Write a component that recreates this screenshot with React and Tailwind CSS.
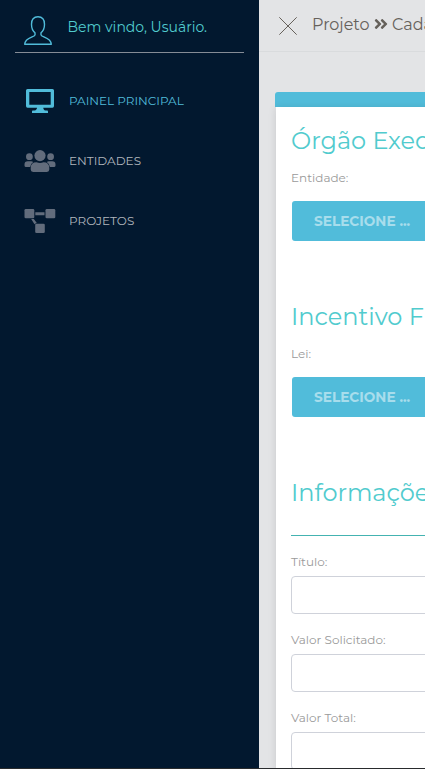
import { FaAngleDoubleRight } from "react-icons/fa";

function UserIcon() {
  return (
    <svg className="block h-[31px] w-[30px] shrink-0" viewBox="0 0 30 31" fill="none" stroke="#51bcda" strokeWidth="1.4" strokeLinejoin="round">
      <path d="M12 20V17.7C9.4 15.8 8.5 12.8 8.5 9.3C8.3 4.5 10.8 1.8 15 1.8S21.7 4.5 21.5 9.3C21.5 12.8 20.6 15.8 18 17.7V20C18.3 22 28.3 22.3 28.3 29.3H1.7C1.7 22.3 11.7 22 12 20Z" />
    </svg>
  );
}

function MonitorIcon() {
  return (
    <svg className="block h-6 w-7" viewBox="0 0 28 24" fill="#51bcda">
      <path fillRule="evenodd" d="M1.5 0h25Q28 0 28 1.500v15.500Q28 18.700 26.500 18.700H17.300C17.300 20 18 21 19.500 21.600H21.300Q22 21.700 22 22.800V24H6V22.800Q6 21.700 6.700 21.600H8.500C10 21 11 20 11 18.700H1.500Q0 18.700 0 17V1.500Q0 0 1.500 0ZM3.300 3v12.700H24.700V3Z" />
    </svg>
  );
}

function UsersIcon() {
  return (
    <svg className="block h-6 w-8" viewBox="0 0 32 24" fill="#626c7c">
      <circle cx="5.400" cy="7.700" r="3.400" />
      <circle cx="26.600" cy="7.700" r="3.400" />
      <circle cx="16" cy="6.600" r="5.600" />
      <path d="M3.700 12.300H7.200Q8.300 12.300 9.200 13.100Q6.700 14.600 6.200 18H2Q.5 18 .5 16.500V15.500Q.5 12.300 3.700 12.300Z" />
      <path d="M28.300 12.300H24.800Q23.700 12.300 22.800 13.100Q25.300 14.600 25.800 18H30Q31.500 18 31.500 16.500V15.500Q31.500 12.300 28.300 12.300Z" />
      <path d="M12.500 13.300Q16 14.700 19.500 13.300Q25.300 13.300 25.300 19V20.500Q25.300 22.900 22.900 22.900H9.100Q6.700 22.900 6.700 20.500V19Q6.700 13.300 12.500 13.300Z" />
    </svg>
  );
}

function DiagramIcon() {
  return (
    <svg className="block h-6 w-8" viewBox="0 0 32 24" fill="#626c7c">
      <rect x=".5" y="0" width="9.800" height="9.300" rx="1.300" />
      <rect x="21.500" y="0" width="9.800" height="9.300" rx="1.300" />
      <rect x="11.200" y="14.800" width="9.600" height="9.200" rx="1.300" />
      <path d="M11.300 3.200H20.500V6.300H11.300ZM7.200 9.900H9.800L12.800 13.900Q11.300 14 10.500 15.200Z" />
    </svg>
  );
}

function NavItem({ icon, className, children }) {
  return (
    <a className={"flex h-[60px] items-center pl-6 text-[12px] " + className}>
      <span className="flex w-8 shrink-0 justify-center">{icon}</span>
      <span className="ml-[13px] whitespace-nowrap">{children}</span>
    </a>
  );
}

function SelectSection({ title, label }) {
  return (
    <section className="h-44">
      <h4 className="h-9 whitespace-nowrap text-[24px] leading-9 text-[#51cbce]">{title}</h4>
      <label className="mt-[10px] block h-[18px] text-[12px] leading-[18px] text-[#9a9a9a]">{label}</label>
      <button className="mt-[14px] ml-px block h-10 w-[220px] rounded-[3px] bg-[#51bcda] pl-[22px] text-left text-[13.7px] font-bold text-white/50">
        SELECIONE ...
      </button>
    </section>
  );
}

function Field({ label }) {
  return (
    <div className="h-[78px]">
      <label className="block h-[18px] text-[12px] leading-[18px] text-[#9a9a9a]">{label}</label>
      <input className="mt-[5px] block h-[38px] w-full rounded border border-[#cfd2da] bg-white" />
    </div>
  );
}

export default function App() {
  return (
    <div className="flex h-[769px] w-[425px] flex-col overflow-hidden bg-[#e3e4e6] font-['Montserrat','Inter','Liberation_Sans',sans-serif]">
      <div className="flex min-h-0 flex-1">
        <aside className="w-[259px] shrink-0 bg-[#02182f]">
          <div className="mx-[15px] flex h-[53px] border-b border-[#858c96] pt-[15px] pl-2">
            <UserIcon />
            <span className="ml-[14.500px] whitespace-nowrap text-[14px] leading-6 text-[#51cbce]">Bem vindo, Usuário.</span>
          </div>
          <nav className="pt-[18px]">
            <NavItem icon={<MonitorIcon />} className="text-[#51bcda]">PAINEL PRINCIPAL</NavItem>
            <NavItem icon={<UsersIcon />} className="text-[#b1b6bd]">ENTIDADES</NavItem>
            <NavItem icon={<DiagramIcon />} className="text-[#b1b6bd]">PROJETOS</NavItem>
          </nav>
        </aside>
        <main className="min-w-0 flex-1 overflow-hidden">
          <header className="flex h-[52px] items-center border-b border-[#d9dbdd] pl-5 text-[16px] text-[#66615b]">
            <svg className="h-[18px] w-[18px] shrink-0" viewBox="0 0 18 18" stroke="#66615b" strokeWidth="1">
              <path d="M.3.3 17.700 17.700M17.700.3.3 17.700" />
            </svg>
            <div className="mb-px ml-[15px] flex items-center whitespace-nowrap">
              <span className="w-[62px]">Projeto</span>
              <FaAngleDoubleRight className="mb-[2px] h-4 w-[14px] shrink-0" />
              <span className="ml-1">Cadastro</span>
            </div>
          </header>
          <div className="mt-10 ml-4 w-[400px]">
            <div className="h-[15px] rounded-t-[3px] bg-[#51bcda]" />
            <div className="ml-px h-[662px] bg-white pt-4 pr-4 pl-[15px] shadow-[0_1px_8px_rgba(0,0,0,0.12)]">
              <SelectSection title="Órgão Executor" label="Entidade:" />
              <SelectSection title="Incentivo Fiscal" label="Lei:" />
              <h4 className="h-[61px] border-b border-[#44b3b1] whitespace-nowrap text-[24px] leading-9 text-[#51cbce]">Informações</h4>
              <div className="pt-[17px]">
                <Field label="Título:" />
                <Field label="Valor Solicitado:" />
                <Field label="Valor Total:" />
              </div>
            </div>
          </div>
        </main>
      </div>
      <div className="h-px shrink-0 bg-[#292b2d]" />
    </div>
  );
}
